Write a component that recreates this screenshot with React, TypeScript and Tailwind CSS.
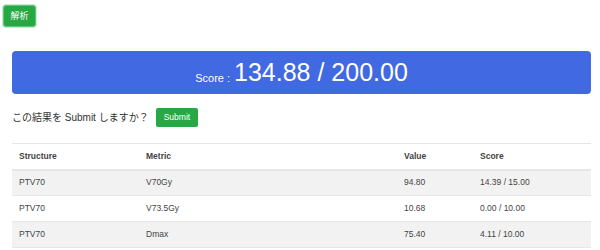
const rows = [
  { structure: 'PTV70', metric: 'V70Gy', value: '94.80', score: '14.39 / 15.00' },
  { structure: 'PTV70', metric: 'V73.5Gy', value: '10.68', score: '0.00 / 10.00' },
  { structure: 'PTV70', metric: 'Dmax', value: '75.40', score: '4.11 / 10.00' },
];

export default function App() {
  return (
    <div
      className="w-[600px] h-[250px] overflow-hidden bg-white text-[#333]"
      style={{ fontFamily: '"Liberation Sans", Arial, "Noto Sans CJK JP", sans-serif' }}
    >
      {/* top action */}
      <div className="flex pt-[5px] pl-[3px]">
        <button className="h-[22px] w-[33px] rounded-[3px] bg-[#28a745] text-white text-[9px] leading-none border border-[#5cc879] shadow-[0_0_0_1px_rgba(40,167,69,0.25)]">
          解析
        </button>
      </div>

      <div className="pl-[12px] pr-[9px]">
        {/* score banner */}
        <div className="mt-[24px] h-[43px] rounded-[4px] bg-[#4169e1] text-white flex items-end justify-center pb-[9px]">
          <span className="text-[11px] leading-none mr-[4px] mb-[1px]">Score :</span>
          <span className="text-[25px] leading-none">134.88 / 200.00</span>
        </div>

        {/* submit prompt */}
        <div className="mt-[14px] flex items-center text-[10px]">
          <span>この結果を Submit しますか？</span>
          <button className="ml-[7px] h-[19px] px-[8px] rounded-[2px] bg-[#28a745] text-white text-[8.5px]">
            Submit
          </button>
        </div>

        {/* results table */}
        <table className="mt-[16px] w-full border-collapse text-[8.5px] text-[#444]">
          <thead>
            <tr className="border-t border-b-2 border-[#e6e6e6] h-[26px]">
              <th className="text-left font-bold pl-[7px] w-[134px]">Structure</th>
              <th className="text-left font-bold w-[258px]">Metric</th>
              <th className="text-left font-bold w-[76px]">Value</th>
              <th className="text-left font-bold">Score</th>
            </tr>
          </thead>
          <tbody>
            {rows.map((r, i) => (
              <tr
                key={i}
                className={`h-[26px] border-b border-[#e6e6e6] ${i % 2 === 0 ? 'bg-[#f2f2f2]' : 'bg-white'}`}
              >
                <td className="pl-[7px]">{r.structure}</td>
                <td>{r.metric}</td>
                <td>{r.value}</td>
                <td>{r.score}</td>
              </tr>
            ))}
          </tbody>
        </table>
      </div>
    </div>
  );
}
